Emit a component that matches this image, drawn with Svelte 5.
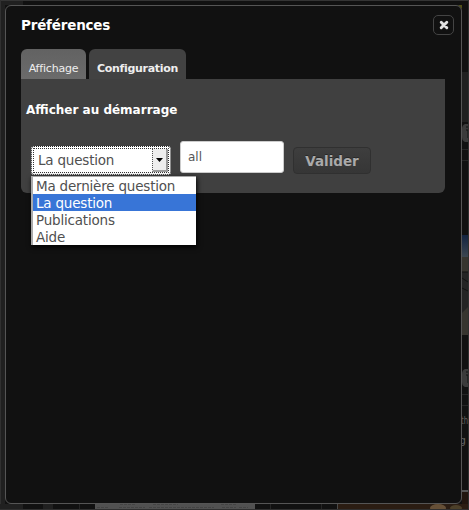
<script>
  const options = ['Ma dernière question', 'La question', 'Publications', 'Aide'];
  let selected = $state('La question');
  let filter = $state('all');
</script>

<main>
  <svg class="backdrop" width="469" height="510" viewBox="0 0 469 510" aria-hidden="true">
    <defs>
      <linearGradient id="sky" x1="0" y1="0" x2="0" y2="1">
        <stop offset="0" stop-color="#142441" /><stop offset="1" stop-color="#3c4650" />
      </linearGradient>
    </defs>
    <rect width="469" height="510" fill="#111" />
    <rect width="23" height="5" fill="#202020" />
    <rect width="5" height="510" fill="#202020" />
    <rect width="469" height="1" fill="#343434" />
    <rect width="1" height="510" fill="#303030" />
    <path d="M458 5h4v4z" fill="#505018" />
    <rect x="462" y="72" width="6" height="50" fill="#202020" />
    <path d="M468 124h-3q-3 1-3 5v8q0 4 3 5h3z" fill="#3b3b3b" />
    <path d="M466 130h2v8M466 127h2" stroke="#111" fill="none" />
    <path d="M462 149.500h6M462 160.500h6M462 394.500h6M462 405.500h6" stroke="#252525" />
    <rect x="462" y="235" width="6" height="22" fill="url(#sky)" />
    <rect x="462" y="257" width="6" height="78" fill="#37352f" />
    <path d="M462 272h6v35l-6 6z" fill="#242424" />
    <path d="M462 272h6M462 278l6 4M462 288l6 3" stroke="#111" />
    <path d="M468 369h-3q-3 1-3 5v8q0 4 3 5h3z" fill="#3b3b3b" />
    <path d="M466 375h2v8M466 372h2" stroke="#111" fill="none" />
    <text x="461" y="424" textLength="7" lengthAdjust="spacingAndGlyphs">th</text>
    <text x="459" y="444">g</text>
    <rect x="462" y="490" width="7" height="2" fill="#555" />
    <rect x="462" y="492" width="7" height="17" fill="#21160f" />
    <rect x="0" y="504" width="95" height="5" fill="#111" />
    <path d="M0 504h23v5H0zM43 504h10v5H43z" fill="#202020" />
    <path d="M79.500 504v5M270.500 504v5M321.500 504v5" stroke="#252525" />
    <rect x="95" y="504" width="160" height="5" fill="#515151" />
    <path d="M97 507.500h11M120 504.500h15M119 507.500h26M149 507.500h38M153 504.500h25M188 507.500h26M221 504.500h16M222 507.500h14M239 507.500h9" stroke="#444" stroke-dasharray="3 1" />
    <rect x="337" y="504" width="131" height="5" fill="#2b1d13" />
    <path d="M337.500 504v5" stroke="#494949" />
    <ellipse cx="438" cy="508" rx="8" ry="4" fill="#665037" />
    <ellipse cx="456" cy="508" rx="6" ry="3" fill="#4c4029" />
    <path d="M0 509.500h469M468.500 0v510" stroke="#303030" />
  </svg>

  <section class="dialog">
    <header>
      <h1>Préférences</h1>
      <button class="close" aria-label="Fermer">
        <svg width="10" height="10" viewBox="0 0 10 10"><path d="M2.200 2.200l5.600 5.600M7.800 2.200l-5.600 5.600" stroke="#e2e2e2" stroke-width="2.900" stroke-linecap="round" /></svg>
      </button>
    </header>

    <nav>
      <button class="tab">Affichage</button>
      <button class="tab active">Configuration</button>
    </nav>

    <div class="panel">
      <h2>Afficher au démarrage</h2>
      <div class="controls">
        <div class="picker">
          <button class="select">
            <span>{selected}</span>
            <i><svg width="7" height="4" viewBox="0 0 7 4"><path d="M0 0h7L3.500 4z" /></svg></i>
          </button>
          <div class="menu" role="listbox">
            {#each options as option}
              <div
                class="option"
                class:chosen={option === selected}
                role="option"
                tabindex="-1"
                aria-selected={option === selected}
                onclick={() => (selected = option)}
                onkeydown={(e) => e.key === 'Enter' && (selected = option)}
              >{option}</div>
            {/each}
          </div>
        </div>
        <input bind:value={filter} aria-label="Filtre" />
        <button class="submit">Valider</button>
      </div>
    </div>
  </section>
</main>

<style>
  main, main * { box-sizing: border-box; }
  main {
    position: relative;
    width: 469px;
    height: 510px;
    padding: 5px 6px 6px 5px;
    overflow: hidden;
    background: #111;
    font-family: Verdana, "DejaVu Sans", sans-serif;
  }
  button, input { font-family: inherit; margin: 0; }
  .backdrop { position: absolute; top: 0; left: 0; }
  .backdrop text { font-size: 11px; fill: #626262; }
  .dialog {
    position: relative;
    width: 457px;
    height: 499px;
    padding: 0 16px 0 15px;
    border: 1px solid #555;
    border-radius: 6px;
    background: #111;
  }
  header { display: flex; justify-content: space-between; height: 43px; }
  h1 {
    margin: 10px 0 0;
    font-size: 13.5px;
    line-height: 18px;
    letter-spacing: -0.2px;
    color: #fff;
  }
  .close {
    display: flex;
    align-items: center;
    justify-content: center;
    width: 21px;
    height: 20px;
    margin: 9px -9px 0 0;
    padding: 0 0 0 1px;
    border: 1px solid #444;
    border-radius: 5px;
    background: #111;
  }
  nav { display: flex; gap: 3px; height: 30px; }
  .tab {
    width: 65px;
    padding: 10px 0 0;
    border: 0;
    border-radius: 6px 6px 0 0;
    background: linear-gradient(#626262, #6b6b6b);
    color: #eee;
    font-size: 11px;
    line-height: 20px;
    letter-spacing: -0.2px;
    white-space: nowrap;
  }
  .active { width: 97px; background: #424242; font-weight: bold; letter-spacing: -0.3px; }
  .panel {
    width: 424px;
    height: 114px;
    padding: 23px 5px 0;
    border-radius: 0 0 6px 6px;
    background: #404040;
  }
  h2 {
    margin: 0;
    font-size: 12px;
    line-height: 17px;
    color: #fff;
    white-space: nowrap;
  }
  .controls { display: flex; align-items: flex-start; padding: 22px 0 0 5px; }
  .picker { position: relative; width: 140px; margin-top: 5px; }
  .select {
    display: flex;
    align-items: center;
    justify-content: space-between;
    width: 140px;
    height: 29px;
    padding: 1px 2px 1px 6px;
    border: 1px dotted #222;
    border-radius: 3px;
    outline: 1px dotted #333;
    outline-offset: -3px;
    background: #fff;
    color: #505050;
    font-size: 13.5px;
    line-height: 18px;
    letter-spacing: -0.2px;
    text-align: left;
  }
  .select span { margin-top: -2px; }
  .select i {
    display: flex;
    align-items: center;
    justify-content: center;
    width: 16px;
    height: 23px;
    border-left: 1px dotted #555;
    border-right: 2px solid #999;
    border-bottom: 2px solid #999;
    background: #eee;
  }
  .menu {
    position: absolute;
    top: 30px;
    left: 0;
    width: 165px;
    height: 69px;
    border-top: 1px solid #aaa;
    border-left: 2px solid #aaa;
    background: #fff;
    box-shadow: 1px 2px 5px #000;
  }
  .option {
    height: 17px;
    padding-left: 3px;
    color: #505050;
    font-size: 13.5px;
    line-height: 19px;
    letter-spacing: -0.2px;
    white-space: nowrap;
  }
  .chosen { background: #3875d7; color: #fff; }
  input {
    width: 104px;
    height: 32px;
    margin-left: 9px;
    padding: 0 7px;
    border: 1px solid #ccc;
    border-radius: 3px;
    background: #fff;
    color: #555;
    font-size: 12px;
    outline: none;
  }
  .submit {
    width: 78px;
    height: 27px;
    margin: 6px 0 0 9px;
    padding: 1px 0 0;
    border: 1px solid #303030;
    border-radius: 4px;
    background: linear-gradient(#3e3e3e, #363636);
    color: #aaa;
    font-size: 13.5px;
    font-weight: bold;
    text-shadow: 0 -1px #282828;
  }
</style>
